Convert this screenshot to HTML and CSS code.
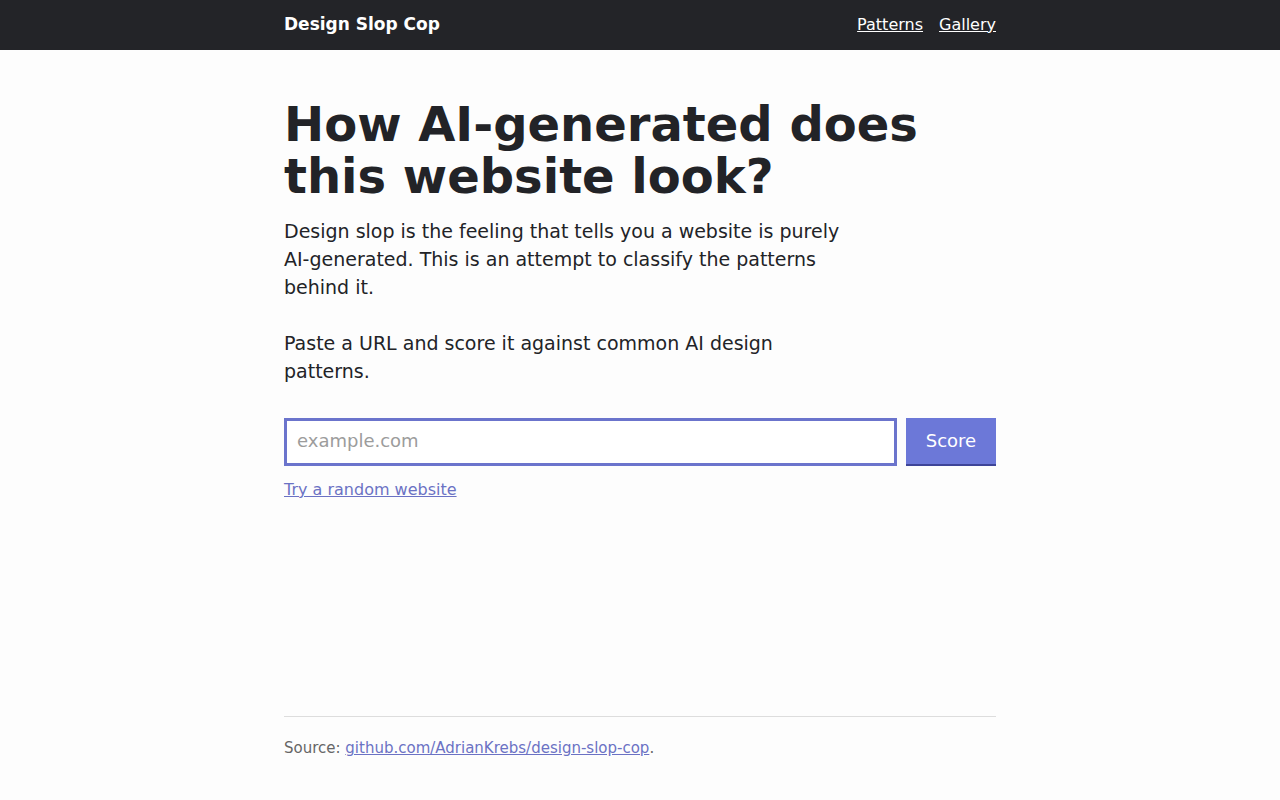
FILE: index.html
```html
<!DOCTYPE html>
<html lang="en">
<head>
  <meta charset="UTF-8" />
  <meta name="viewport" content="width=device-width, initial-scale=1.0">
  <title>Design Slop Cop</title>
  <link rel="stylesheet" href="styles.css">
</head>
<body>
  <header class="topbar">
    <div class="wrap topbar-inner">
      <a class="brand" href="#">Design Slop Cop</a>
      <nav class="nav">
        <a href="#">Patterns</a>
        <a href="#">Gallery</a>
      </nav>
    </div>
  </header>

  <main class="wrap main">
    <h1>How AI-generated does this website look?</h1>
    <p class="lead">Design slop is the feeling that tells you a website is purely AI-generated. This is an attempt to classify the patterns behind it.</p>
    <p class="lead">Paste a URL and score it against common AI design patterns.</p>

    <form class="score-form" id="scoreForm">
      <input type="text" id="url" placeholder="example.com">
      <button type="submit">Score</button>
    </form>
    <a class="random" href="#">Try a random website</a>
  </main>

  <footer class="wrap footer">
    <p>Source: <a href="#">github.com/AdrianKrebs/design-slop-cop</a>.</p>
  </footer>
</body>
</html>
```

FILE: styles.css
```css
* {
  box-sizing: border-box;
}
body {
  margin: 0;
  min-height: 100vh;
  display: flex;
  flex-direction: column;
  font-family: "DejaVu Sans", sans-serif;
  background-color: #fdfdfd;
  color: #222327;
}
.wrap {
  width: 712px;
  margin: 0 auto;
}
.topbar {
  background-color: #232428;
  height: 50px;
}
.topbar-inner {
  height: 100%;
  padding-bottom: 2px;
  display: flex;
  align-items: center;
  justify-content: space-between;
}
.brand {
  color: #fff;
  font-weight: bold;
  font-size: 17px;
  text-decoration: none;
}
.nav {
  display: flex;
  gap: 16px;
}
.nav a {
  color: #fff;
  font-size: 16px;
}
.main {
  padding-top: 48px;
}
h1 {
  margin: 0 0 15px;
  font-size: 48px;
  line-height: 52px;
  font-weight: bold;
  color: #222327;
}
.lead {
  max-width: 560px;
  margin: 0 0 28px;
  font-size: 19px;
  line-height: 28px;
}
.score-form {
  display: flex;
  gap: 9px;
  margin-top: 33px;
}
.score-form input {
  flex: 1;
  height: 48px;
  padding: 0 10px 3px;
  border: 3px solid #6b74cc;
  font-family: inherit;
  font-size: 18px;
  color: #222327;
  background: #fff;
  outline: none;
}
.score-form input::placeholder {
  color: #9c9c9c;
}
.score-form button {
  width: 90px;
  height: 48px;
  padding-bottom: 2px;
  background-color: #6c78d8;
  color: #fff;
  border: none;
  border-bottom: 2px solid #3e4598;
  font-family: inherit;
  font-size: 18px;
  cursor: pointer;
}
.random {
  display: inline-block;
  margin-top: 12px;
  font-size: 16px;
  line-height: 24px;
  color: #6b72c4;
}
.footer {
  margin-top: auto;
  border-top: 1px solid #dddddd;
  padding: 20px 0 41px;
  color: #666;
  font-size: 15px;
}
.footer p {
  margin: 0;
  line-height: 22px;
}
.footer a {
  color: #6b72c4;
}
```
